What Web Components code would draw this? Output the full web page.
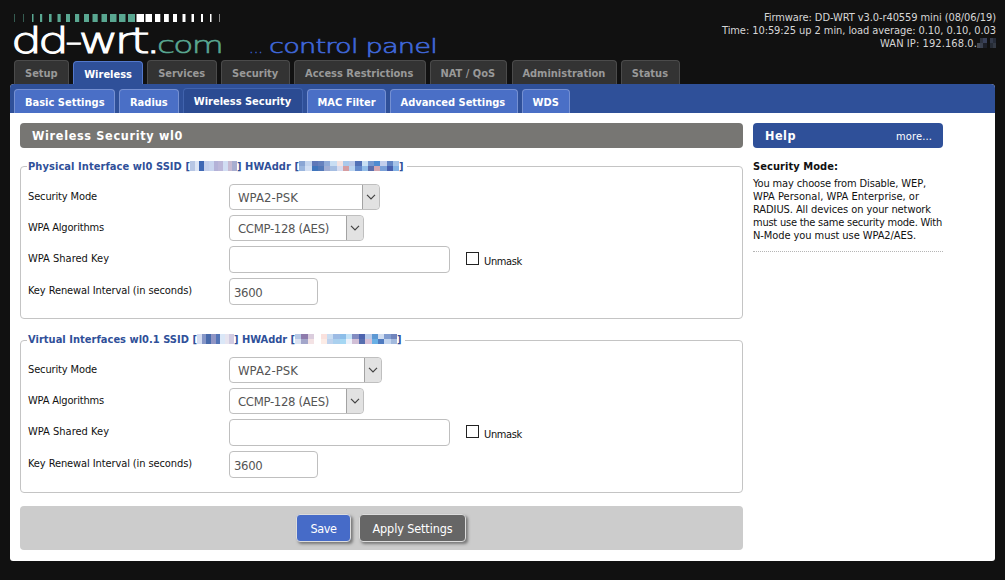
<!DOCTYPE html>
<html lang="en">
<head>
<meta charset="utf-8">
<title>DD-WRT - Wireless Security</title>
<style>
html,body{margin:0;background:#111}
body{width:1005px;height:580px;overflow:hidden;font:11px/13px "DejaVu Sans Condensed","DejaVu Sans",Tahoma,sans-serif;font-stretch:condensed;color:#111}
</style>
</head>
<body>
<router-page></router-page>
<script>
/* Text run tracked to a given width */
customElements.define('fit-text', class extends HTMLElement {
  connectedCallback() {
    if (this.shadowRoot) return;
    this.attachShadow({mode: 'open'}).innerHTML =
      '<style>:host{display:inline-block;white-space:pre;flex:none}span{display:inline-block}</style><span><slot></slot></span>';
    const s = this.shadowRoot.querySelector('span'), w = +this.getAttribute('w');
    const n = [...this.textContent].length;
    s.style.letterSpacing = '0px';
    const natural = s.getBoundingClientRect().width;
    if (natural) s.style.letterSpacing = ((w - natural) / n) + 'px';
    this.style.width = w + 'px';
  }
});

const define = (name, render) => customElements.define(name, class extends HTMLElement {
  connectedCallback() {
    if (!this.shadowRoot) this.attachShadow({mode: 'open'}).innerHTML = render(this);
  }
});

define('site-logo', () => {
  const bars = [[14,1],[23,1],[32,1.5],[40,2.2],[49,2.6],[57.5,3.2],[66,4],[75,4.2],[84,5],[92.5,5.2],[101.5,5.5],[110,6.5],[119,6.5],[128,7],
    [136.5,7.5],[145.5,6.5],[155,5.3],[164,4.8],[173,4],[182.5,3],[191.5,2.5],[201,2],[210,1.5],[219,1]];
  return `<style>:host{display:block;width:460px;height:60px}svg{display:block}
    text{font-family:"DejaVu Sans","DejaVu Sans Light",sans-serif;font-weight:200;font-stretch:normal}</style>
  <svg width="460" height="60">
    ${bars.map(([x, w], i) => `<rect x="${x}" y="14" width="${w}" height="8" fill="${i < 14 ? '#59a791' : '#fff'}" opacity="${w < 1.2 ? .5 : 1}"/>`).join('')}
    <text x="11" y="52.5" font-size="36" letter-spacing="-3" fill="#fff" stroke="#fff" stroke-width="1" textLength="146" lengthAdjust="spacingAndGlyphs">dd-wrt.</text>
    <text x="157" y="52.5" font-size="22.5" letter-spacing="-1.2" fill="#59a791" stroke="#59a791" stroke-width=".5" textLength="65" lengthAdjust="spacingAndGlyphs">com</text>
    <text x="249" y="52.5" font-size="18" fill="#3f67d8" stroke="#3f67d8" stroke-width=".4" textLength="14" lengthAdjust="spacingAndGlyphs">...</text>
    <text x="269" y="52.5" font-size="20" letter-spacing="-.6" fill="#3f67d8" stroke="#3f67d8" stroke-width=".6" textLength="168" lengthAdjust="spacingAndGlyphs" xml:space="preserve">control panel</text>
  </svg>`;
});

define('pixel-mask', el => {
  const rows = el.getAttribute('colors').split('/');
  return `<style>:host{display:grid;grid-template-rows:repeat(${rows.length},1fr);flex:none}div{display:flex}i{flex:1}</style>` +
    rows.map(r => `<div>${r.trim().split(/\s+/).map(c => `<i style="background:#${c}"></i>`).join('')}</div>`).join('');
});

define('system-info', () => `<style>
  :host{display:flex;flex-direction:column;align-items:flex-end;color:#d6d6d6;padding:11px 9px 0 0;box-sizing:border-box;line-height:13px}
  .ip{display:flex}pixel-mask{width:19px;height:10px;margin-top:1px}</style>
  <fit-text w="232">Firmware: DD-WRT v3.0-r40559 mini (08/06/19)</fit-text>
  <fit-text w="274">Time: 10:59:25 up 2 min, load average: 0.10, 0.10, 0.03</fit-text>
  <div class="ip"><fit-text w="97">WAN IP: 192.168.0.</fit-text><pixel-mask colors="111 2d3340 39415a 111 333a4a 252b38 / 454b55 3a4150 1c1f28 111 252b35 333944"></pixel-mask></div>`);

define('nav-tab', el => {
  const on = el.hasAttribute('active'), sub = el.hasAttribute('sub');
  const bg = on ? (sub ? '#2b4b92' : '#2f5099') : (sub ? '#4a6fc6' : '#333');
  const line = on ? (sub ? '#4163ad' : '#5378cc') : (sub ? '#7590d2' : '#4b4b4b');
  return `<style>
  :host{display:flex;justify-content:center;box-sizing:border-box;flex:none;width:${el.getAttribute('w')}px;
    height:${sub ? (on ? 25 : 24) : (on ? 23 : 24)}px;padding-top:6px;
    background:${bg};border:1px solid ${line};border-bottom:0;border-radius:4px 4px 0 0;
    font-weight:bold;line-height:14px;color:${on || sub ? '#fff' : '#999'}}
  </style><fit-text w="${el.getAttribute('tw')}"><slot></slot></fit-text>`;
});
/* A tab measures its own label, since slotted text is not part of fit-text's text */
const Tab = customElements.get('nav-tab');
Tab.prototype.connectedCallback = (base => function () {
  base.call(this);
  const ft = this.shadowRoot.querySelector('fit-text');
  const s = ft.shadowRoot.querySelector('span'), w = +this.getAttribute('tw');
  s.style.letterSpacing = '0px';
  s.style.letterSpacing = ((w - s.getBoundingClientRect().width) / this.textContent.length) + 'px';
})(Tab.prototype.connectedCallback);

define('main-tabs', () => `<style>:host{display:flex;align-items:flex-end;gap:4.2px;padding-left:14px;height:24px}</style>
  <nav-tab w="55" tw="33">Setup</nav-tab><nav-tab active w="70" tw="48">Wireless</nav-tab><nav-tab w="69.5" tw="48">Services</nav-tab>
  <nav-tab w="69" tw="47">Security</nav-tab><nav-tab w="131.5" tw="110">Access Restrictions</nav-tab><nav-tab w="77.5" tw="56.5">NAT / QoS</nav-tab>
  <nav-tab w="105.5" tw="84">Administration</nav-tab><nav-tab w="58.5" tw="37.5">Status</nav-tab>`);

define('sub-tabs', () => `<style>:host{display:flex;align-items:flex-end;gap:4px;padding-left:4px;height:29px;background:#2f5099;border-radius:4px 4px 0 0}</style>
  <nav-tab sub w="101" tw="79">Basic Settings</nav-tab><nav-tab sub w="60" tw="38">Radius</nav-tab><nav-tab sub active w="119.5" tw="98">Wireless Security</nav-tab>
  <nav-tab sub w="79" tw="57">MAC Filter</nav-tab><nav-tab sub w="128" tw="106">Advanced Settings</nav-tab><nav-tab sub w="48" tw="26">WDS</nav-tab>`);

define('title-bar', el => `<style>
  :host{display:flex;justify-content:space-between;align-items:center;height:25px;box-sizing:border-box;padding:1px 11px 0 12px;border-radius:4px;
    background:${el.getAttribute('tone')};color:#fff}
  ::slotted(fit-text[strong]){font-weight:bold;font-size:12.5px;line-height:16px}</style><slot></slot>`);

define('select-box', el => `<style>
  :host{display:flex;box-sizing:border-box;width:${el.getAttribute('w')}px;height:26px;border:1px solid #bfbfbf;border-radius:4px;overflow:hidden;
    color:#555;font-size:13px;line-height:25px;padding-left:8px;justify-content:space-between;background:#fff}
  .b{width:16px;margin:-1px -1px -1px 0;background:#e2e2e2;border:1px solid #a3a3a3;border-radius:0 3px 3px 0;display:grid;place-items:center}
  </style><slot></slot><div class="b"><svg width="10" height="6" fill="none" stroke="#444" stroke-width="1.2"><path d="M1 .8 5 4.8 9 .8"/></svg></div>`);

define('text-field', el => `<style>
  :host{display:block;box-sizing:border-box;width:${el.getAttribute('w')}px;height:27px;border:1px solid #bfbfbf;border-radius:4px;
    color:#555;font-size:13px;line-height:27px;padding-left:4px;background:#fff}</style><slot></slot>`);

define('check-box', () => `<style>:host{display:flex;margin-left:16px}
  i{box-sizing:border-box;width:13px;height:13px;border:1px solid #222;margin:6px 5px 0 0;background:#fff}fit-text{margin-top:9px}</style>
  <i></i><fit-text w="38">Unmask</fit-text>`);

define('form-row', () => `<style>:host{display:flex;height:31px}
  .l{width:201px;padding-top:6px;flex:none}</style><div class="l"><slot name="label"></slot></div><slot></slot>`);

define('field-group', () => `<style>
  :host{display:block;box-sizing:border-box;height:153px;border:1px solid #c4c4c4;border-radius:4px;padding-left:8px}
  .legend{display:flex;width:max-content;height:13px;margin:var(--legend-top,-8px) 0 0 -2px;padding:0 3px 0 1px;background:#fff;color:#2f5099;font-weight:bold;position:relative}
  .rows{padding-top:11px;margin-left:-1px}</style>
  <div class="legend"><slot name="legend"></slot></div><div class="rows"><slot></slot></div>`);

const rows = w => `
  <form-row><fit-text slot="label" w="69">Security Mode</fit-text><select-box w="${w}"><fit-text w="60">WPA2-PSK</fit-text></select-box></form-row>
  <form-row><fit-text slot="label" w="76">WPA Algorithms</fit-text><select-box w="134.5"><fit-text w="91">CCMP-128 (AES)</fit-text></select-box></form-row>
  <form-row style="height:32px"><fit-text slot="label" w="81">WPA Shared Key</fit-text><text-field w="221"></text-field><check-box></check-box></form-row>
  <form-row><fit-text slot="label" w="164">Key Renewal Interval (in seconds)</fit-text><text-field w="89"><fit-text w="28.5">3600</fit-text></text-field></form-row>`;

define('push-button', el => `<style>
  :host{display:flex;justify-content:center;box-sizing:border-box;width:${el.getAttribute('w')}px;height:28px;border:1px solid #dcdcdc;border-radius:4px;
    background:${el.getAttribute('tone')};color:#fff;font-size:12.5px;line-height:27px;box-shadow:2px 2px 3px #777}</style><slot></slot>`);

define('help-panel', () => `<style>
  :host{display:block;width:190px}
  h4{margin:12px 0 3px;font-size:11px;line-height:14px}
  p{margin:0;display:flex;flex-direction:column;padding-bottom:9px;border-bottom:1px dotted #b5b5b5}</style>
  <title-bar tone="#2f5099"><fit-text strong w="31">Help</fit-text><fit-text w="36">more...</fit-text></title-bar>
  <h4><fit-text w="85">Security Mode:</fit-text></h4>
  <p><fit-text w="173">You may choose from Disable, WEP,</fit-text><fit-text w="166">WPA Personal, WPA Enterprise, or</fit-text>
  <fit-text w="178">RADIUS. All devices on your network</fit-text><fit-text w="189">must use the same security mode. With</fit-text>
  <fit-text w="163">N-Mode you must use WPA2/AES.</fit-text></p>`);

define('security-form', () => `<style>
  :host{display:block;width:723px}
  field-group{margin-top:18px}.first{--legend-top:-7px}.second{margin-top:21px}
  pixel-mask{height:10px;margin-top:1px}
  .actions{display:flex;gap:8px;justify-content:center;align-items:flex-start;box-sizing:border-box;height:44px;margin-top:13px;padding:8px 1px 0 0;background:#ccc;border-radius:4px}</style>
  <title-bar tone="#777673"><fit-text strong w="151">Wireless Security wl0</fit-text></title-bar>
  <field-group class="first">
    <fit-text slot="legend" w="162">Physical Interface wl0 SSID [</fit-text>
    <pixel-mask slot="legend" style="width:47px" colors="b7c6e4 dde5f5 3f68b4 c5d0ec c9d5ef b4b2d8 bcb7d9 d1ddf3 c7bad2 a8aed0"></pixel-mask>
    <fit-text slot="legend" w="62">] HWAddr [</fit-text>
    <pixel-mask slot="legend" style="width:100px" colors="8ba6d4 c5d5ee 6078b8 6681bd 91abd8 c9def3 f4e3e2 aac9eb b8c7e8 5271b7 c9e0f4 7698cf 4f8bd0 c3cfec 6285c5 a6c3e8 / 9bb6de d3dff3 3f75bc 5379b9 a1aed4 a6bee2 d6dcf0 d69da1 bad4f1 648acb 92bde8 5b6eac d3a6b0 7ba1d8 475fae 83b2e5"></pixel-mask>
    <fit-text slot="legend" w="5">]</fit-text>
    ${rows(150.5)}
  </field-group>
  <field-group class="second">
    <fit-text slot="legend" w="169">Virtual Interfaces wl0.1 SSID [</fit-text>
    <pixel-mask slot="legend" style="width:37px" colors="d6ddf1 8696c7 496bac 9095c4 5475b7 dae7f7 e7e4ef d1cbe2"></pixel-mask>
    <fit-text slot="legend" w="61">] HWAddr [</fit-text>
    <pixel-mask slot="legend" style="width:102px" colors="b7c8e5 8e7bac dbcddd fff fae1dd c9ddf2 9dbbe4 8cbee9 c3e3f7 828cc1 4c63ae b9cbe9 5d98d3 d0ddf0 819dd0 7185bd / dce3f2 a3a6ca f3e2e4 fff fcece6 bfd2ed aad0ee a5d7f3 edf1fa d1bfd6 576faf d8c0d7 69b0e5 4f7bc0 c3d5ef a3badd"></pixel-mask>
    <fit-text slot="legend" w="5">]</fit-text>
    ${rows(152.5)}
  </field-group>
  <div class="actions"><push-button w="55" tone="#466bc8"><fit-text w="26">Save</fit-text></push-button><push-button w="107" tone="#666"><fit-text w="80">Apply Settings</fit-text></push-button></div>`);

define('router-page', () => `<style>
  :host{display:block;width:1005px}
  header{display:flex;justify-content:space-between;height:60px}
  main{margin:0 10px;background:#fff;border-radius:4px 4px 3px 3px;height:477px}
  .cols{display:flex;gap:10px;padding:10px}</style>
  <header><site-logo></site-logo><system-info></system-info></header>
  <main-tabs></main-tabs>
  <main><sub-tabs></sub-tabs><div class="cols"><security-form></security-form><help-panel></help-panel></div></main>`);
</script>
</body>
</html>
